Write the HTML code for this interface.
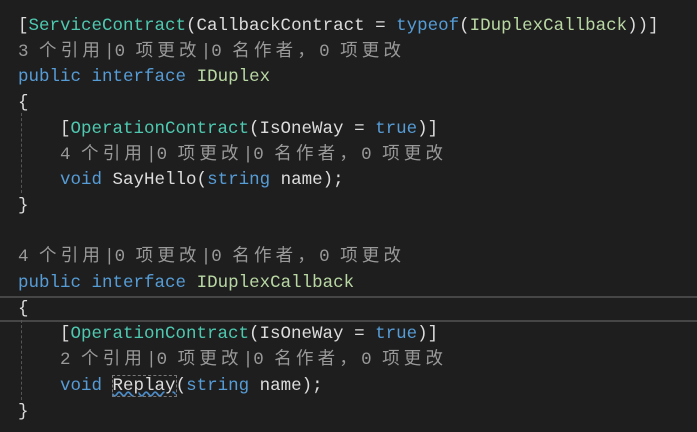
<!DOCTYPE html>
<html><head><meta charset="utf-8"><style>
body{margin:0;background:#1e1e1e;width:697px;height:432px;overflow:hidden;position:relative}
.c{position:absolute;left:18px;top:14px;font-family:"Liberation Mono","Noto Sans CJK SC",monospace;font-size:17.5px;line-height:25.7px;color:#dcdcdc;white-space:pre}
.t{color:#4ec9b0}.k{color:#569cd6}.i{color:#b8d7a3}.g{color:#999}
.g b{font-weight:normal;letter-spacing:4.2px}
.cur{position:absolute;left:0;top:296px;width:697px;height:22px;border-top:2px solid #464646;border-bottom:2px solid #464646}
.guide{position:absolute;left:21px;border-left:1px dashed #555}
.sq{text-decoration:underline wavy #4b8bc8;outline:1px dashed #777}
</style></head><body>
<div class="cur"></div>
<div class="guide" style="top:113px;height:80px"></div>
<div class="guide" style="top:320px;height:80px"></div>
<div class="c">[<span class="t">ServiceContract</span>(CallbackContract = <span class="k">typeof</span>(<span class="i">IDuplexCallback</span>))]
<span class="g">3 <b>个引用</b>|0 <b>项更改</b>|0 <b>名作者，</b>0 <b>项更改</b></span>
<span class="k">public</span> <span class="k">interface</span> <span class="i">IDuplex</span>
{
    [<span class="t">OperationContract</span>(IsOneWay = <span class="k">true</span>)]
    <span class="g">4 <b>个引用</b>|0 <b>项更改</b>|0 <b>名作者，</b>0 <b>项更改</b></span>
    <span class="k">void</span> SayHello(<span class="k">string</span> name);
}

<span class="g">4 <b>个引用</b>|0 <b>项更改</b>|0 <b>名作者，</b>0 <b>项更改</b></span>
<span class="k">public</span> <span class="k">interface</span> <span class="i">IDuplexCallback</span>
{
    [<span class="t">OperationContract</span>(IsOneWay = <span class="k">true</span>)]
    <span class="g">2 <b>个引用</b>|0 <b>项更改</b>|0 <b>名作者，</b>0 <b>项更改</b></span>
    <span class="k">void</span> <span class="sq">Replay</span>(<span class="k">string</span> name);
}</div>
</body></html>
